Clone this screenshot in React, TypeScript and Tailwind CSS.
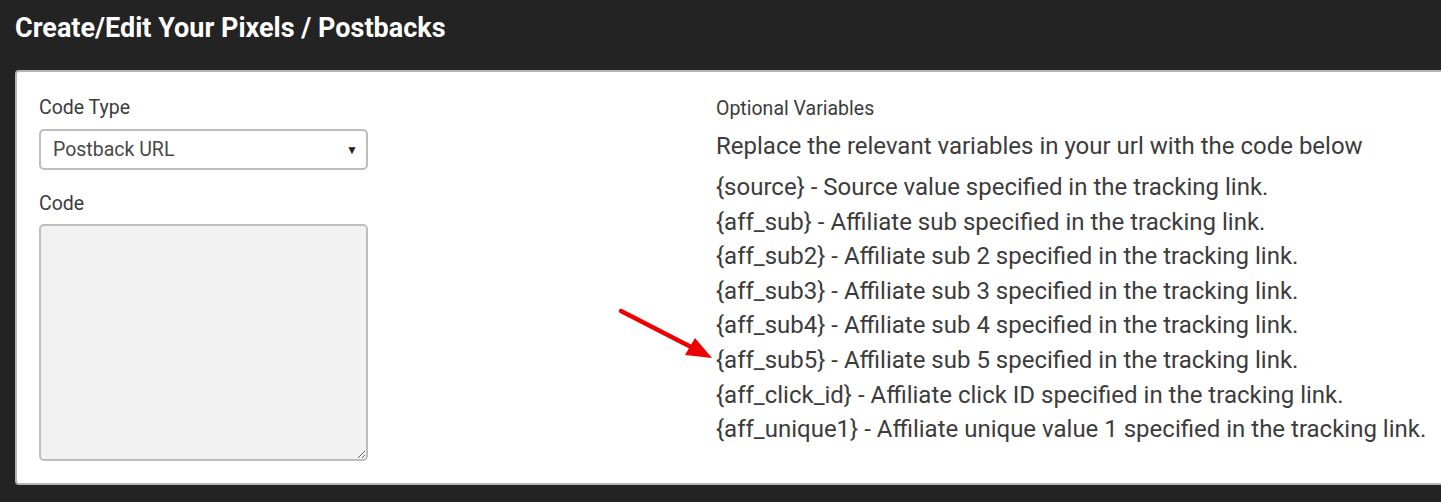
import React from 'react';

const vars = [
  ['{source}', 'Source value specified in the tracking link.'],
  ['{aff_sub}', 'Affiliate sub specified in the tracking link.'],
  ['{aff_sub2}', 'Affiliate sub 2 specified in the tracking link.'],
  ['{aff_sub3}', 'Affiliate sub 3 specified in the tracking link.'],
  ['{aff_sub4}', 'Affiliate sub 4 specified in the tracking link.'],
  ['{aff_sub5}', 'Affiliate sub 5 specified in the tracking link.'],
  ['{aff_click_id}', 'Affiliate click ID specified in the tracking link.'],
  ['{aff_unique1}', 'Affiliate unique value 1 specified in the tracking link.'],
];

export default function App() {
  return (
    <div className="h-[502px] w-[1441px] overflow-hidden bg-[#232323] font-['Roboto',sans-serif]">
      <div className="flex h-[70px] items-start pl-[15px] pt-[10px]">
        <h1 className="text-[27px] font-bold leading-[36px] text-white">Create/Edit Your Pixels / Postbacks</h1>
      </div>

      <div className="relative ml-[15px] h-[415px] w-[1460px] rounded-[4px] border-2 border-[#b5b5b5] bg-white">
        <div className="flex pl-[22px] pt-[23px]">
          <div className="w-[329px]">
            <label className="block text-[19.5px] leading-[26px] text-[#3c3c3c]">Code Type</label>
            <div className="mt-[8px] flex h-[41px] items-center justify-between rounded-[5px] border-2 border-[#bdbdbd] bg-white pl-[12px] pr-[8px]">
              <span className="text-[19.5px] text-[#484848]">Postback URL</span>
              <span className="text-[12px] text-[#222]">▼</span>
            </div>
            <label className="mt-[21px] block text-[19.5px] leading-[26px] text-[#3c3c3c]">Code</label>
            <textarea
              readOnly
              className="mt-[7px] block h-[237px] w-full rounded-[5px] border-2 border-[#bdbdbd] bg-[#f2f2f2] outline-none"
            />
          </div>

          <div className="ml-[348px] pt-[1px]">
            <div className="text-[19.5px] leading-[26px] text-[#3c3c3c]">Optional Variables</div>
            <div className="mt-[9px] text-[24px] leading-[30px] text-[#3c3c3c]">Replace the relevant variables in your url with the code below</div>
            <ul className="mt-[9px]">
              {vars.map(([k, d]) => (
                <li key={k} className="text-[24px] leading-[34.6px] text-[#3c3c3c]">
                  {k} - {d}
                </li>
              ))}
            </ul>
          </div>
        </div>

        <svg className="absolute left-[598px] top-[230px]" width="110" height="70" viewBox="0 0 110 70">
          <line x1="6" y1="9" x2="80" y2="47" stroke="#ee0000" strokeWidth="4.5" strokeLinecap="round" />
          <polygon points="97,56 70,53 80,36" fill="#ee0000" />
        </svg>
      </div>
    </div>
  );
}
